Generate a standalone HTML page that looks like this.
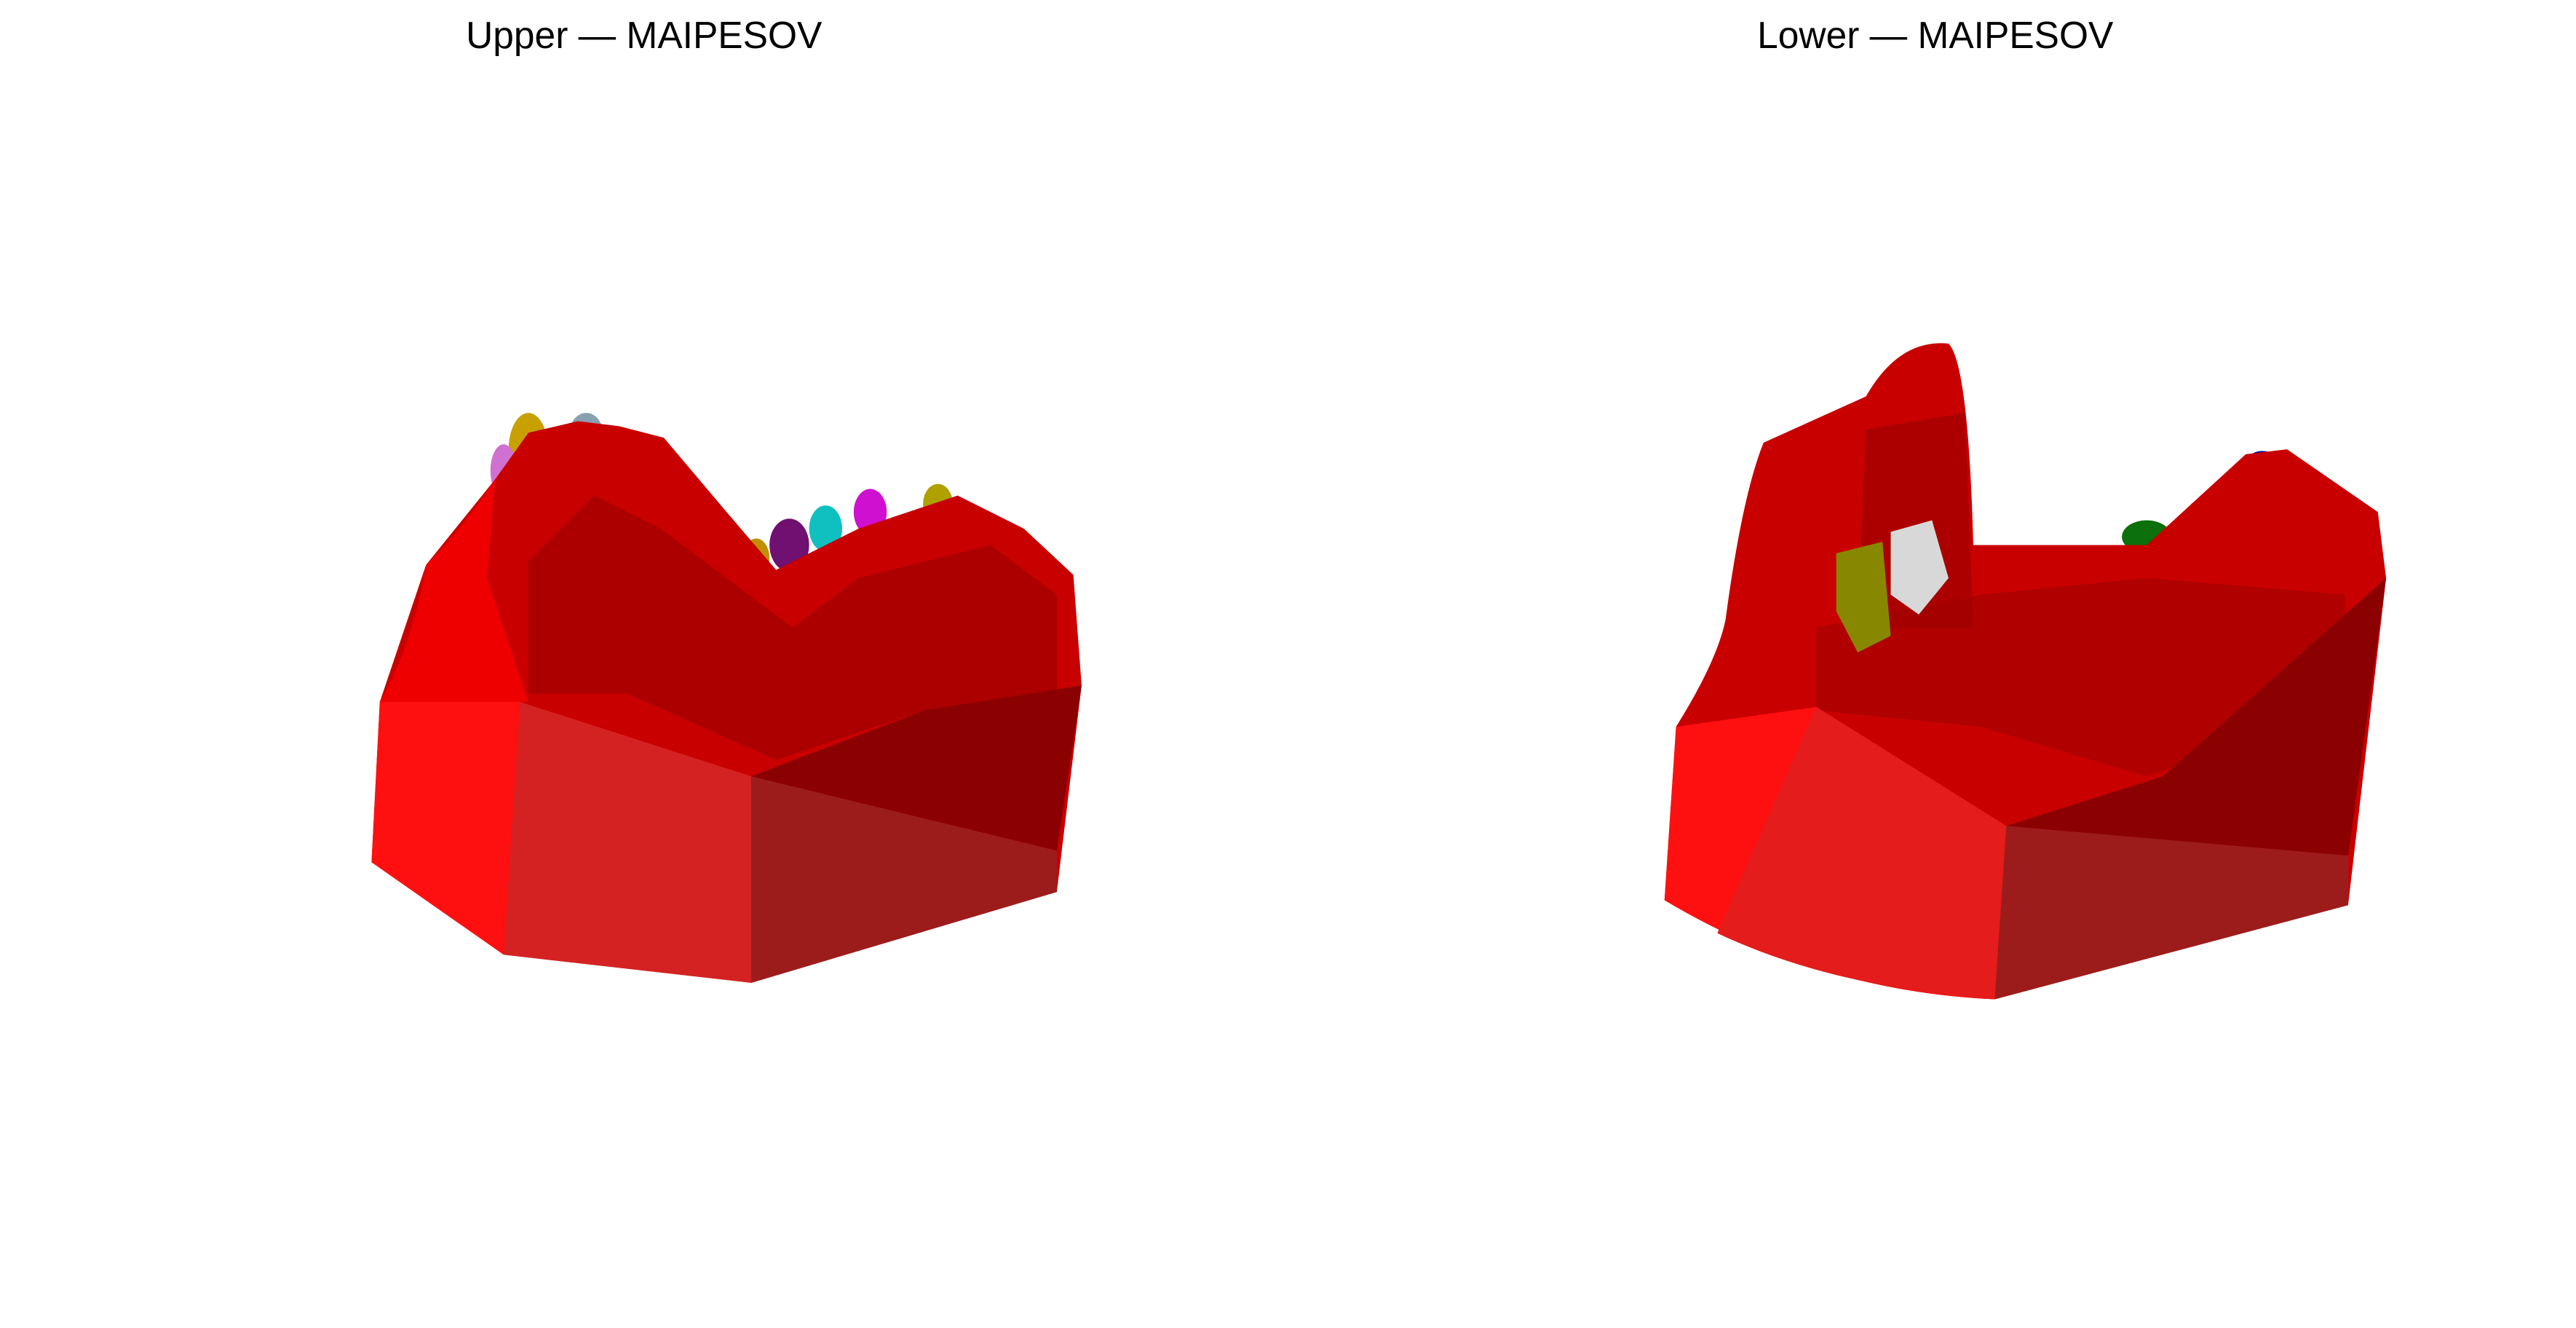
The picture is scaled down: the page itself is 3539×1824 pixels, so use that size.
<!DOCTYPE html>
<html><head><meta charset="utf-8"><style>
html,body{margin:0;padding:0;background:#fff;width:3539px;height:1824px;overflow:hidden}
svg{display:block}
</style></head><body>
<svg width="3539" height="1824" viewBox="0 0 1560 804" xmlns="http://www.w3.org/2000/svg">
<rect width="1560" height="804" fill="#fff"/>
<text x="390" y="29" font-family="Liberation Sans, DejaVu Sans, sans-serif" font-size="22.7" text-anchor="middle" fill="#000">Upper — MAIPESOV</text>
<text x="1172" y="29" font-family="Liberation Sans, DejaVu Sans, sans-serif" font-size="22.7" text-anchor="middle" fill="#000">Lower — MAIPESOV</text>

<!-- Upper -->
<g>
<ellipse cx="320" cy="272" rx="12" ry="22" fill="#c8a000"/>
<ellipse cx="305" cy="285" rx="8" ry="16" fill="#d070d0"/>
<ellipse cx="355" cy="262" rx="10" ry="12" fill="#88a0b0"/>
<ellipse cx="478" cy="330" rx="12" ry="16" fill="#701070"/>
<ellipse cx="500" cy="320" rx="10" ry="14" fill="#10c0c0"/>
<ellipse cx="527" cy="310" rx="10" ry="14" fill="#d010d0"/>
<ellipse cx="568" cy="305" rx="9" ry="12" fill="#b0a000"/>
<ellipse cx="458" cy="338" rx="8" ry="12" fill="#c09000"/>
<polygon fill="#c80000" points="258,342 300,290 320,262 350,255 375,258 402,265 440,310 470,345 520,320 580,300 620,320 650,348 655,415 640,540 455,595 305,578 225,522 230,425"/>
<polygon fill="#a00000" opacity="0.7" points="320,340 360,300 400,320 440,350 480,380 520,350 600,330 640,360 640,420 560,430 470,460 380,420 320,420"/>
<path fill="#ee0000" d="M258,342 Q280,320 300,290 L295,350 L320,425 L230,425 Q250,390 258,342 Z"/>
<polygon fill="#ff1010" points="225,522 230,425 315,425 305,578"/>
<polygon fill="#d42222" points="305,578 315,425 455,470 455,595"/>
<polygon fill="#9c1c1c" points="455,470 640,515 640,540 455,595"/>
<polygon fill="#8b0000" points="455,470 560,430 655,415 640,515"/>
</g>

<!-- Lower -->
<g>
<ellipse cx="1300" cy="325" rx="15" ry="10" fill="#0c700c"/>
<ellipse cx="1335" cy="310" rx="10" ry="8" fill="#0010a0"/>
<ellipse cx="1370" cy="285" rx="12" ry="12" fill="#1010a0"/>
<path fill="#c80000" d="M1015,440 Q1040,400 1045,375 Q1055,300 1068,268 L1130,240 Q1150,205 1180,208 Q1192,220 1195,330 L1300,330 L1360,275 L1385,272 L1440,310 L1445,350 L1422,548 L1208,605 Q1100,600 1008,545 Z"/>
<polygon fill="#a00000" opacity="0.7" points="1130,260 1190,250 1195,380 1125,380"/>
<polygon fill="#a00000" opacity="0.6" points="1100,380 1200,360 1300,350 1420,360 1420,430 1300,470 1200,440 1100,430"/>
<polygon fill="#888800" points="1112,335 1140,328 1145,385 1125,395 1112,370"/>
<polygon fill="#d8d8d8" points="1145,322 1170,315 1180,350 1162,372 1145,360"/>
<path fill="#ff1010" d="M1008,545 L1015,440 L1100,428 L1215,500 L1208,605 Q1100,600 1008,545 Z"/>
<path fill="#e41c1c" d="M1100,428 L1215,500 L1208,605 Q1110,598 1040,565 Z"/>
<polygon fill="#9c1c1c" points="1215,500 1422,518 1422,548 1208,605"/>
<polygon fill="#8b0000" points="1215,500 1310,470 1445,350 1422,518"/>
</g>
</svg>
</body></html>
